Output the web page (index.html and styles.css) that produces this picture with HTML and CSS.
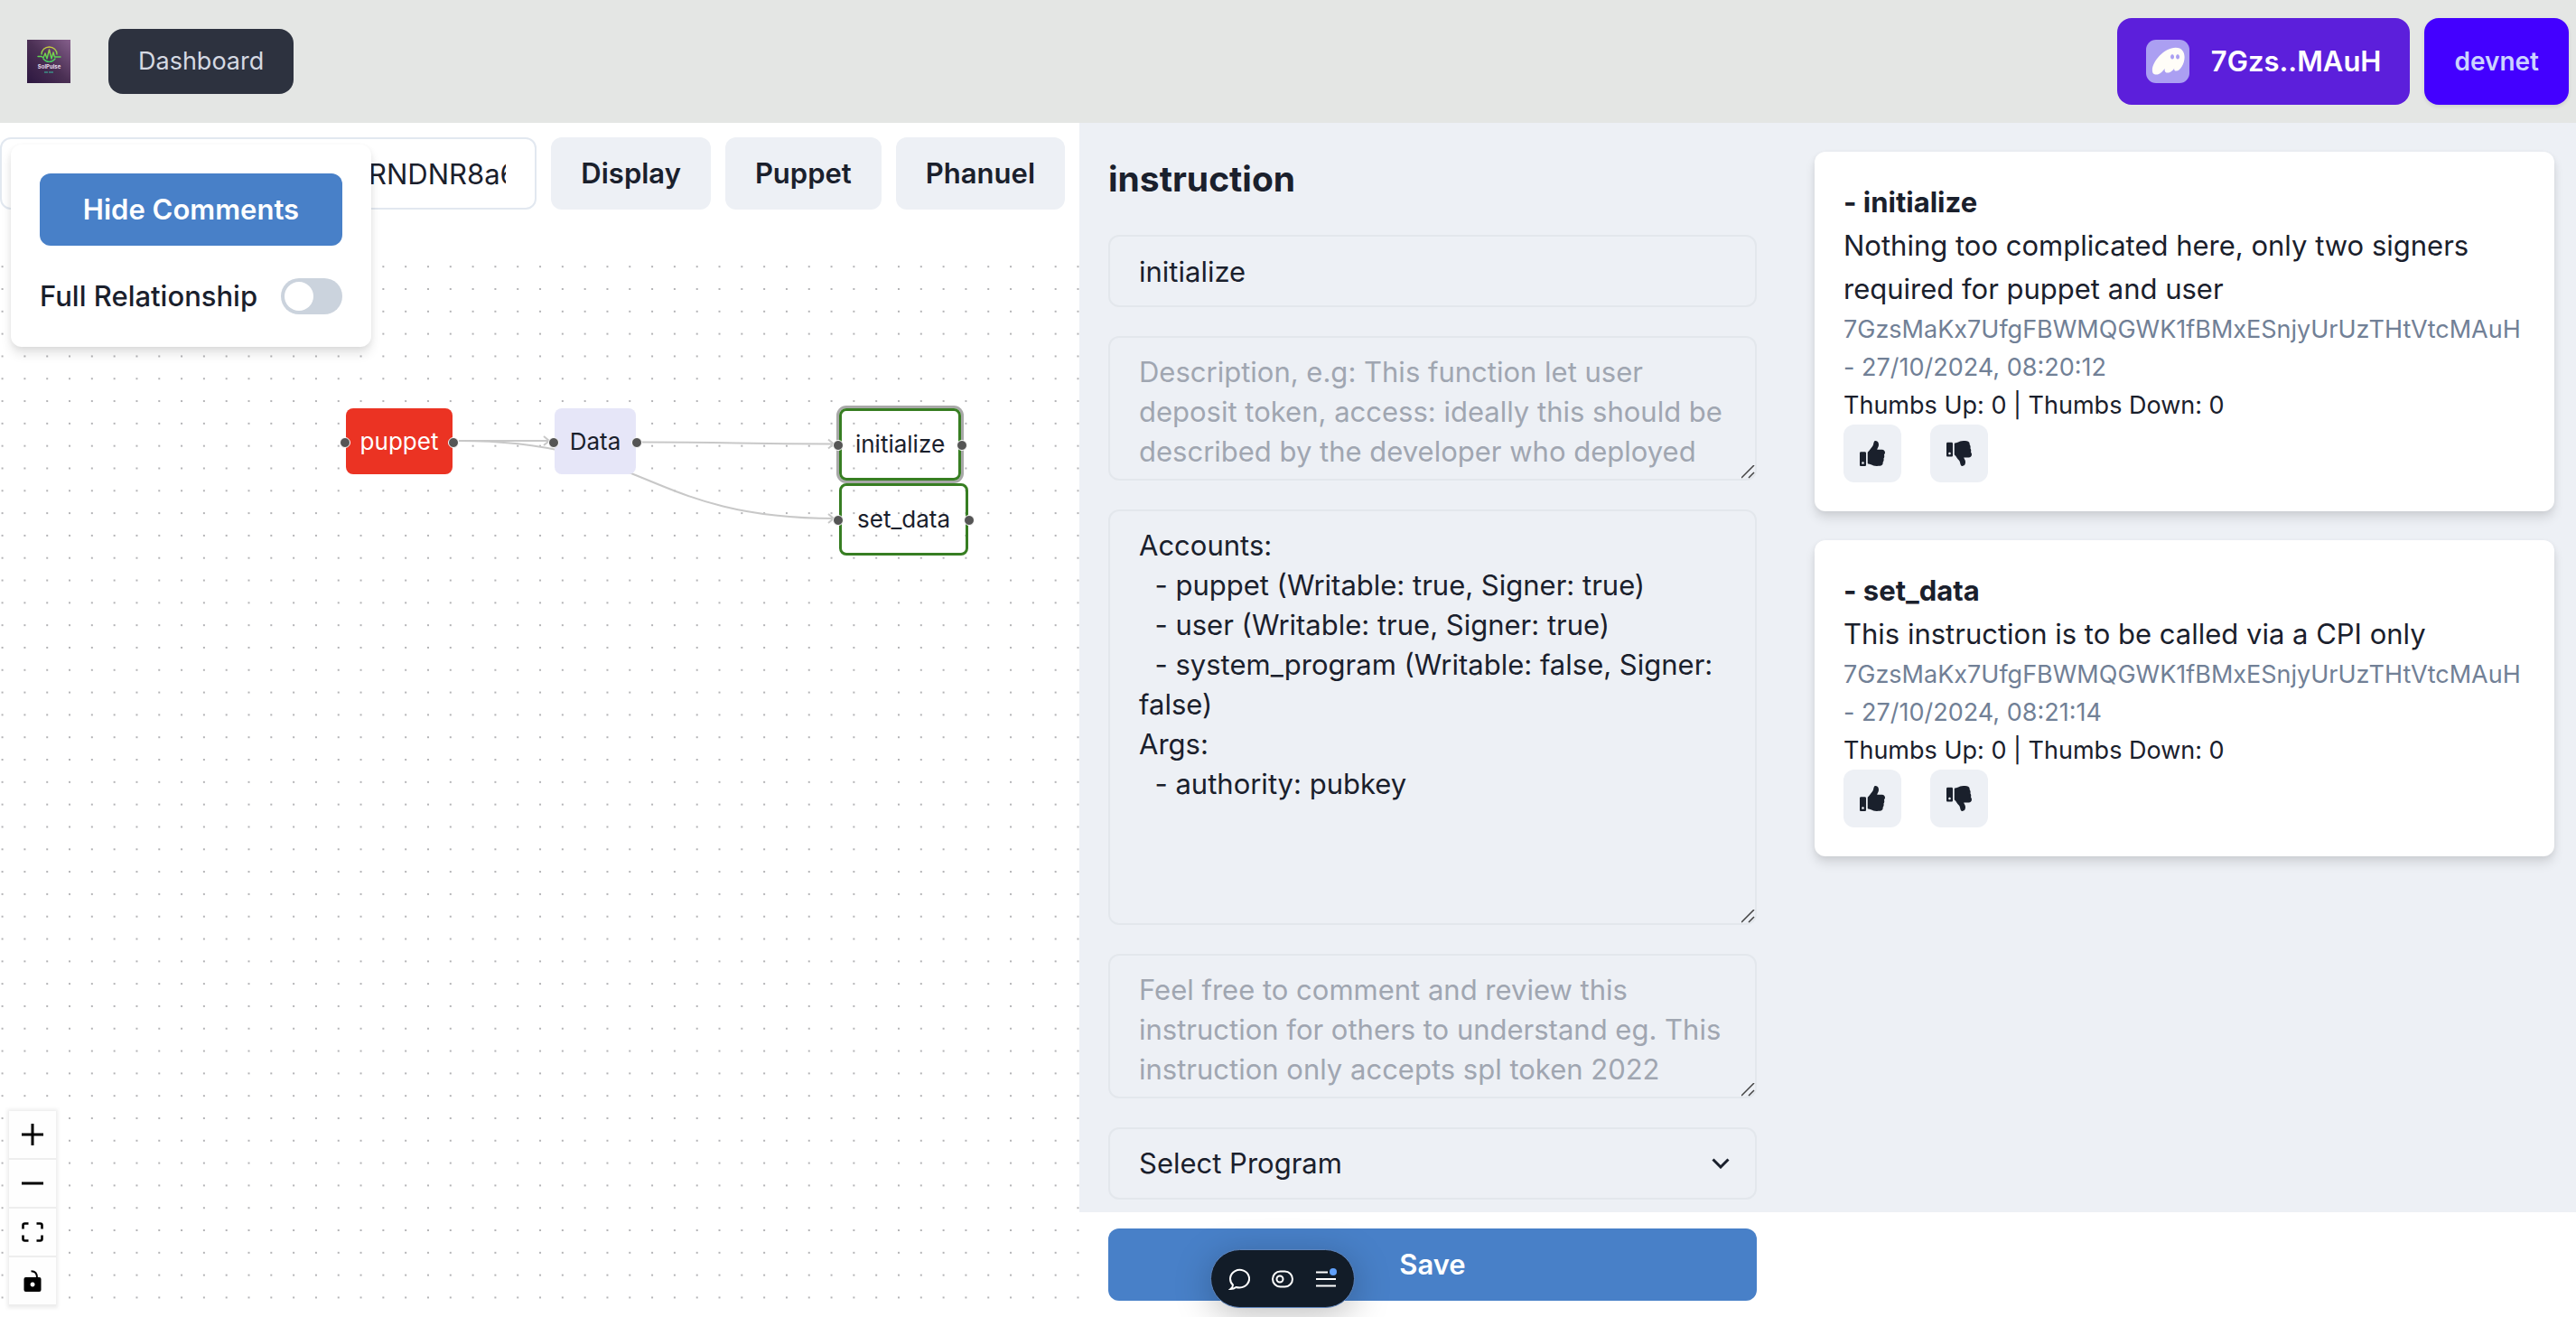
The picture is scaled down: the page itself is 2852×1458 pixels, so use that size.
FILE: index.html
```html
<!DOCTYPE html>
<html lang="en">
<head>
<meta charset="utf-8">
<meta name="viewport" content="width=device-width, initial-scale=1">
<title>SolPulse</title>
<link rel="stylesheet" href="styles.css">
</head>
<body>
<svg class="sprite" aria-hidden="true">
  <symbol id="thumb-up" viewBox="0 0 512 512"><path d="M104 224H24c-13.255 0-24 10.745-24 24v240c0 13.255 10.745 24 24 24h80c13.255 0 24-10.745 24-24V248c0-13.255-10.745-24-24-24zM64 472c-13.255 0-24-10.745-24-24s10.745-24 24-24 24 10.745 24 24-10.745 24-24 24zM384 81.452c0 42.416-25.97 66.208-33.277 94.548h101.723c33.397 0 59.397 27.746 59.553 58.098.084 17.938-7.546 37.249-19.439 49.197l-.11.11c9.836 23.337 8.237 56.037-9.308 79.469 8.681 25.895-.069 57.704-16.382 74.757 4.298 17.598 2.244 32.575-6.148 44.632C440.202 511.587 389.616 512 346.839 512l-2.845-.001c-48.287-.017-87.806-17.598-119.56-31.725-15.957-7.099-36.821-15.887-52.651-16.178-6.54-.12-11.783-5.457-11.783-11.998v-213.77c0-3.2 1.282-6.271 3.558-8.521 39.614-39.144 56.648-80.587 89.117-113.111 14.804-14.832 20.188-37.236 25.393-58.902C282.515 39.293 291.817 0 312 0c24 0 72 8 72 81.452z"/></symbol>
  <symbol id="thumb-down" viewBox="0 0 512 512"><path d="M0 56v240c0 13.255 10.745 24 24 24h80c13.255 0 24-10.745 24-24V56c0-13.255-10.745-24-24-24H24C10.745 32 0 42.745 0 56zm40 200c0-13.255 10.745-24 24-24s24 10.745 24 24-10.745 24-24 24-24-10.745-24-24zm272 256c-20.183 0-29.485-39.293-33.931-57.795-5.206-21.666-10.589-44.07-25.393-58.902-32.469-32.524-49.503-73.967-89.117-113.111a11.98 11.98 0 0 1-3.558-8.521V59.901c0-6.541 5.243-11.878 11.783-11.998 15.831-.29 36.694-9.079 52.651-16.178C256.189 17.598 295.709.017 343.995 0h2.844c42.777 0 93.363.413 113.774 29.737 8.392 12.057 10.446 27.034 6.148 44.632 16.312 17.053 25.063 48.863 16.382 74.757 17.544 23.432 19.143 56.132 9.308 79.469l.11.11c11.893 11.949 19.523 31.259 19.439 49.197-.156 30.352-26.157 58.098-59.553 58.098H350.723C358.03 364.34 384 388.132 384 430.548 384 504 336 512 312 512z"/></symbol>
</svg>

<header class="topbar">
  <svg class="logo" viewBox="0 0 48 48" role="img" aria-label="SolPulse logo">
    <defs>
      <linearGradient id="logo-bg" x1="0" y1="1" x2="1" y2="0"><stop offset="0" stop-color="#2c1740"/><stop offset=".5" stop-color="#4b3054"/><stop offset="1" stop-color="#86608c"/></linearGradient>
      <linearGradient id="logo-ring" gradientUnits="userSpaceOnUse" x1="0" y1="8" x2="0" y2="25"><stop offset="0" stop-color="#c9c840"/><stop offset=".6" stop-color="#62d850"/><stop offset="1" stop-color="#43c968"/></linearGradient>
    </defs>
    <rect width="48" height="48" fill="url(#logo-bg)"/>
    <g fill="none" stroke="url(#logo-ring)" stroke-width="1.4" stroke-linecap="round" stroke-linejoin="round">
      <path d="M16 16a8.500 8 0 0 1 17 0M18 21a8 8 0 0 0 13 0"/>
      <path d="M12 18.500h4l2 1.500 2-5 2 6 2.500-10 2.500 10 2-7 1.500 5h6.500"/>
    </g>
    <text class="logo-name" x="24.500" y="32" text-anchor="middle">SolPulse</text>
    <path d="M19 36h4m1 0h5" stroke="#3c8f86" stroke-width="1.500"/>
  </svg>
  <a class="nav-link" href="#">Dashboard</a>
  <div class="topbar-actions">
    <button class="wallet" type="button">
      <svg class="wallet-icon" viewBox="0 0 48 48" aria-hidden="true">
        <rect width="48" height="48" rx="11" fill="#ab9ff2"/>
        <path fill="#fffdf8" fill-rule="evenodd" d="M20.700 31.700c-2 3-5.300 6.800-9.700 6.800-2.100 0-4.100-.9-4.100-4.700C6.900 24 20.300 8.800 32.700 8.800c7.100 0 9.900 4.900 9.900 10.500 0 7.100-4.600 15.300-9.300 15.300-1.500 0-2.200-.8-2.200-2.100 0-.3.100-.7.200-1.100-1.600 2.700-4.700 5.200-7.500 5.200-2.100 0-3.200-1.300-3.200-3.200 0-.7.100-1.300.1-1.700zM29 16.300a2 2.600 0 1 0 .1 0zm6 0a2 2.600 0 1 0 .1 0z"/>
      </svg>
      7Gzs..MAuH
    </button>
    <button class="network" type="button">devnet</button>
  </div>
</header>

<main class="workspace">
  <section class="graph-pane">
    <div class="toolbar">
      <input class="program-input" type="text" aria-label="Program address" value="RNDNR8a6">
      <button class="btn" type="button">Display</button>
      <button class="btn" type="button">Puppet</button>
      <button class="btn" type="button">Phanuel</button>
    </div>
    <div class="canvas">
      <svg class="edges" aria-hidden="true">
        <defs>
          <pattern id="dots" x="1.600" y="14.200" width="24.810" height="24.810" patternUnits="userSpaceOnUse"><circle cx="1" cy="1" r=".9" fill="#909094"/></pattern>
        </defs>
        <rect width="100%" height="100%" fill="url(#dots)"/>
        <g fill="none" stroke="#c8c8c8" stroke-width="2">
          <path d="M508 208H608"/>
          <path d="M508 208C716 208 716 294 924 294"/>
          <path d="M710 209.500C816 209.500 816 211.500 924 211.500"/>
          <path d="M602 203l6 5-6 5M917 206.500l6 5-6 5M917 289l6 5-6 5"/>
        </g>
      </svg>
      <div class="node node-signer">puppet</div>
      <div class="node node-data">Data</div>
      <div class="node node-call node-initialize">initialize</div>
      <div class="node node-call node-set">set_data</div>
      <div class="controls">
        <button class="control" type="button" aria-label="Zoom in"><svg viewBox="0 0 24 24"><path d="M12 0v24M0 12h24" stroke="#000" stroke-width="3"/></svg></button>
        <button class="control" type="button" aria-label="Zoom out"><svg viewBox="0 0 24 24"><path d="M0 12h24" stroke="#000" stroke-width="3"/></svg></button>
        <button class="control" type="button" aria-label="Fit view"><svg viewBox="0 0 24 24"><path d="M1.500 8.500v-4q0-2 2-2h4M16.500 2.500h4q2 0 2 2v4M22.500 15.500v4q0 2-2 2h-4M7.500 21.500h-4q-2 0-2-2v-4" fill="none" stroke="#000" stroke-width="2.600"/></svg></button>
        <button class="control" type="button" aria-label="Toggle interactivity"><svg viewBox="0 0 24 24"><path d="M10.500 1.200q6.500 0 6.500 7.300" fill="none" stroke="#000" stroke-width="2"/><path fill-rule="evenodd" d="M4.500 8h15q2 0 2 2v12q0 2-2 2h-15q-2 0-2-2V10q0-2 2-2zM12 13.500a2.500 2.500 0 1 0 .1 0z"/></svg></button>
      </div>
    </div>
    <div class="options">
      <button class="btn btn-primary" type="button">Hide Comments</button>
      <label class="switch-row">Full Relationship <input class="switch" type="checkbox"></label>
    </div>
  </section>

  <section class="form-pane">
    <h1 class="form-title">instruction</h1>
    <input class="field" type="text" aria-label="Name" value="initialize">
    <textarea class="field field-area" aria-label="Description" placeholder="Description, e.g: This function let user deposit token, access: ideally this should be described by the developer who deployed"></textarea>
    <textarea class="field field-area field-tall" aria-label="Details">Accounts:
  - puppet (Writable: true, Signer: true)
  - user (Writable: true, Signer: true)
  - system_program (Writable: false, Signer: false)
Args:
  - authority: pubkey</textarea>
    <textarea class="field field-area" aria-label="Comment" placeholder="Feel free to comment and review this instruction for others to understand eg. This instruction only accepts spl token 2022"></textarea>
    <div class="select-wrap">
      <select class="field" aria-label="Program"><option>Select Program</option></select>
      <svg class="chevron" viewBox="0 0 20 12" aria-hidden="true"><path d="M1.500 1.500l8.500 8.500 8.500-8.500" fill="none" stroke="#1a202c" stroke-width="3"/></svg>
    </div>
    <button class="btn btn-primary save" type="button">Save</button>
  </section>

  <section class="comments-pane">
    <article class="comment">
      <h2 class="comment-title">- initialize</h2>
      <p>Nothing too complicated here, only two signers required for puppet and user</p>
      <p class="comment-meta">7GzsMaKx7UfgFBWMQGWK1fBMxESnjyUrUzTHtVtcMAuH - 27/10/2024, 08:20:12</p>
      <p class="comment-votes">Thumbs Up: 0 | Thumbs Down: 0</p>
      <div class="votes">
        <button class="vote" type="button" aria-label="Thumbs up"><svg><use href="#thumb-up"/></svg></button>
        <button class="vote" type="button" aria-label="Thumbs down"><svg><use href="#thumb-down"/></svg></button>
      </div>
    </article>
    <article class="comment">
      <h2 class="comment-title">- set_data</h2>
      <p>This instruction is to be called via a CPI only</p>
      <p class="comment-meta">7GzsMaKx7UfgFBWMQGWK1fBMxESnjyUrUzTHtVtcMAuH - 27/10/2024, 08:21:14</p>
      <p class="comment-votes">Thumbs Up: 0 | Thumbs Down: 0</p>
      <div class="votes">
        <button class="vote" type="button" aria-label="Thumbs up"><svg><use href="#thumb-up"/></svg></button>
        <button class="vote" type="button" aria-label="Thumbs down"><svg><use href="#thumb-down"/></svg></button>
      </div>
    </article>
  </section>
</main>

<div class="dock">
  <button class="dock-btn" type="button" aria-label="Comment"><svg viewBox="0 0 24 24"><path d="M5 18.500A10.500 9.800 0 1 1 12.500 21.500Q10 21.500 8.500 21 6 23 2.500 23 5 21 5 18.500z"/></svg></button>
  <button class="dock-btn" type="button" aria-label="Flags"><svg viewBox="0 0 24 24"><rect x="1" y="3.500" width="22" height="17" rx="8.500"/><circle cx="9" cy="12" r="3.500"/></svg></button>
  <button class="dock-btn" type="button" aria-label="Menu"><svg viewBox="0 0 24 24"><path d="M1 4.500h13M1 12h22M1 19.500h22"/><circle class="dock-dot" cx="20" cy="4" r="4"/></svg></button>
</div>
</body>
</html>
```
FILE: styles.css
```css
* { box-sizing: border-box; }

body {
  margin: 0;
  min-height: 100vh;
  display: flex;
  flex-direction: column;
  font-family: Inter, "Liberation Sans", sans-serif;
  font-size: 31px;
  line-height: 48px;
  color: #1a202c;
  background: #fff;
}

button, input, select, textarea { font: inherit; color: inherit; }
button { border: 0; padding: 0; cursor: pointer; }
h1, h2, p { margin: 0; }
.sprite { display: none; }

/* Top bar */
.topbar {
  display: flex;
  align-items: center;
  height: 136px;
  padding: 0 8px 0 30px;
  background: #e4e6e4;
}
.logo { width: 48px; height: 48px; margin-right: 42px; }
.logo-name { font-size: 6px; font-weight: 700; fill: #e6dcea; }
.nav-link {
  padding: 0 33px;
  border-radius: 16px;
  font-size: 27px;
  line-height: 72px;
  color: #d5d9e2;
  background: #2d323f;
  text-decoration: none;
}
.topbar-actions { display: flex; gap: 16px; margin-left: auto; }
.wallet, .network { height: 96px; border-radius: 16px; }
.wallet {
  display: flex;
  align-items: center;
  gap: 24px;
  padding: 0 32px;
  font-weight: 600;
  color: #fff;
  background: #5c1fdb;
}
.wallet-icon { width: 48px; height: 48px; }
.network {
  padding: 0 33px;
  font-size: 28px;
  font-weight: 600;
  color: #ccd3ff;
  background: #4300ff;
  box-shadow: 0 2px 4px rgba(0, 0, 0, .1);
}

/* Workspace */
.workspace {
  flex: 1;
  display: grid;
  grid-template-columns: 1195fr 782fr 875fr;
}
.btn {
  height: 80px;
  padding: 0 33px;
  border-radius: 12px;
  font-weight: 600;
  background: #edf0f5;
}
.btn-primary { color: #fff; background: #4880c8; }

/* Graph */
.graph-pane {
  position: relative;
  display: flex;
  flex-direction: column;
  min-width: 0;
}
.toolbar {
  display: flex;
  align-items: flex-start;
  gap: 16px;
  min-height: 144px;
  padding: 16px 16px 0 0;
}
.program-input {
  flex: 1;
  min-width: 0;
  height: 80px;
  padding: 0 32px 0 406px;
  border: 2px solid #e2e8f0;
  border-radius: 12px;
  background: #fff;
}
.canvas { position: relative; flex: 1; }
.edges { position: absolute; inset: 0; width: 100%; height: 100%; }

.options {
  position: absolute;
  top: 24px;
  left: 12px;
  width: 399px;
  padding: 32px 32px 0;
  border-radius: 12px;
  background: #fff;
  box-shadow: 0 8px 12px rgba(0, 0, 0, .1), 0 2px 6px rgba(0, 0, 0, .06);
}
.options .btn { width: 100%; }
.switch-row {
  display: flex;
  align-items: center;
  justify-content: space-between;
  padding: 32px 0;
  font-weight: 500;
}
.switch {
  appearance: none;
  width: 68px;
  height: 40px;
  margin: 0;
  padding: 4px;
  border-radius: 20px;
  background: #cbd3dd;
}
.switch::before {
  content: "";
  display: block;
  width: 32px;
  height: 32px;
  border-radius: 50%;
  background: #fff;
}

.node {
  position: absolute;
  display: flex;
  align-items: center;
  justify-content: center;
  height: 73px;
  border-radius: 8px;
  font-size: 26px;
}
.node::before, .node::after {
  content: "";
  position: absolute;
  top: calc(50% - 5px);
  width: 10px;
  height: 10px;
  border: 1px solid #fff;
  border-radius: 50%;
  background: #555;
}
.node::before { left: -7px; }
.node::after { right: -7px; }
.node-signer { left: 383px; top: 172px; width: 118px; color: #fff; background: #eb3323; }
.node-data { left: 614px; top: 172px; width: 90px; background: #e6e6f8; }
.node-call { left: 929px; height: 80px; border: 3px solid #377e22; }
.node-call::before { left: -10px; }
.node-call::after { right: -10px; }
.node-initialize { top: 172px; width: 135px; box-shadow: 0 0 0 3px #a8a8a8; }
.node-set { top: 255px; width: 143px; }

.controls {
  position: absolute;
  left: 10px;
  bottom: 12px;
  display: grid;
  box-shadow: 0 0 4px 2px rgba(0, 0, 0, .08);
}
.control {
  display: grid;
  place-items: center;
  width: 52px;
  height: 54px;
  border-bottom: 2px solid #eee;
  background: #fefefe;
}
.control svg { width: 24px; height: 24px; }

/* Instruction form */
.form-pane, .comments-pane {
  height: calc(100vh - 252px);
  background: #edf0f5;
}
.form-pane {
  display: flex;
  flex-direction: column;
  gap: 32px;
  padding: 32px;
}
.form-pane > * { flex: none; }
.form-title { font-size: 39px; line-height: 60px; font-weight: 700; }
.field {
  display: block;
  width: 100%;
  height: 80px;
  padding: 0 32px;
  border: 2px solid #e3e7ec;
  border-radius: 12px;
  background: transparent;
}
.field::placeholder { color: #a0a6b1; opacity: 1; }
.field-area {
  height: 160px;
  padding: 16px 32px;
  line-height: 44px;
  resize: vertical;
  overflow: hidden;
}
.field-area::-webkit-resizer {
  background: url("data:image/svg+xml,%3Csvg xmlns='http://www.w3.org/2000/svg' width='15' height='15'%3E%3Cpath d='M0 14L14 0M8 14l6-6' stroke='%23444' stroke-width='1.500'/%3E%3C/svg%3E") no-repeat;
}
.field-tall { height: 460px; }
.select-wrap { position: relative; }
.select-wrap .field { appearance: none; }
.chevron {
  position: absolute;
  top: 34px;
  right: 30px;
  width: 20px;
  height: 12px;
  pointer-events: none;
}

/* Comments */
.comments-pane {
  display: flex;
  flex-direction: column;
  gap: 32px;
  padding: 32px 24px 0 32px;
}
.comment {
  padding: 32px;
  border-radius: 12px;
  background: #fff;
  box-shadow: 0 8px 12px rgba(0, 0, 0, .1), 0 2px 6px rgba(0, 0, 0, .06);
}
.comment-title { font-size: 31px; line-height: 48px; font-weight: 700; }
.comment-meta, .comment-votes { font-size: 27px; line-height: 42px; }
.comment-meta { color: #718096; }
.votes { display: flex; gap: 32px; }
.vote {
  display: grid;
  place-items: center;
  width: 64px;
  height: 64px;
  border-radius: 12px;
  background: #edf0f5;
}
.vote svg { width: 28px; height: 28px; fill: #1a202c; }

/* Floating dock */
.dock {
  position: fixed;
  left: 1340px;
  bottom: 10px;
  display: flex;
  align-items: center;
  gap: 24px;
  height: 65px;
  padding: 0 19px;
  border: 1px solid #5d83bb;
  border-radius: 33px;
  background: #121c28;
  box-shadow: 0 8px 40px rgba(0, 0, 0, .25);
}
.dock-btn { display: grid; width: 24px; height: 24px; background: none; }
.dock-btn svg { fill: none; stroke: #fff; stroke-width: 2; }
.dock-dot { fill: #60a0fa; stroke: none; }
```
